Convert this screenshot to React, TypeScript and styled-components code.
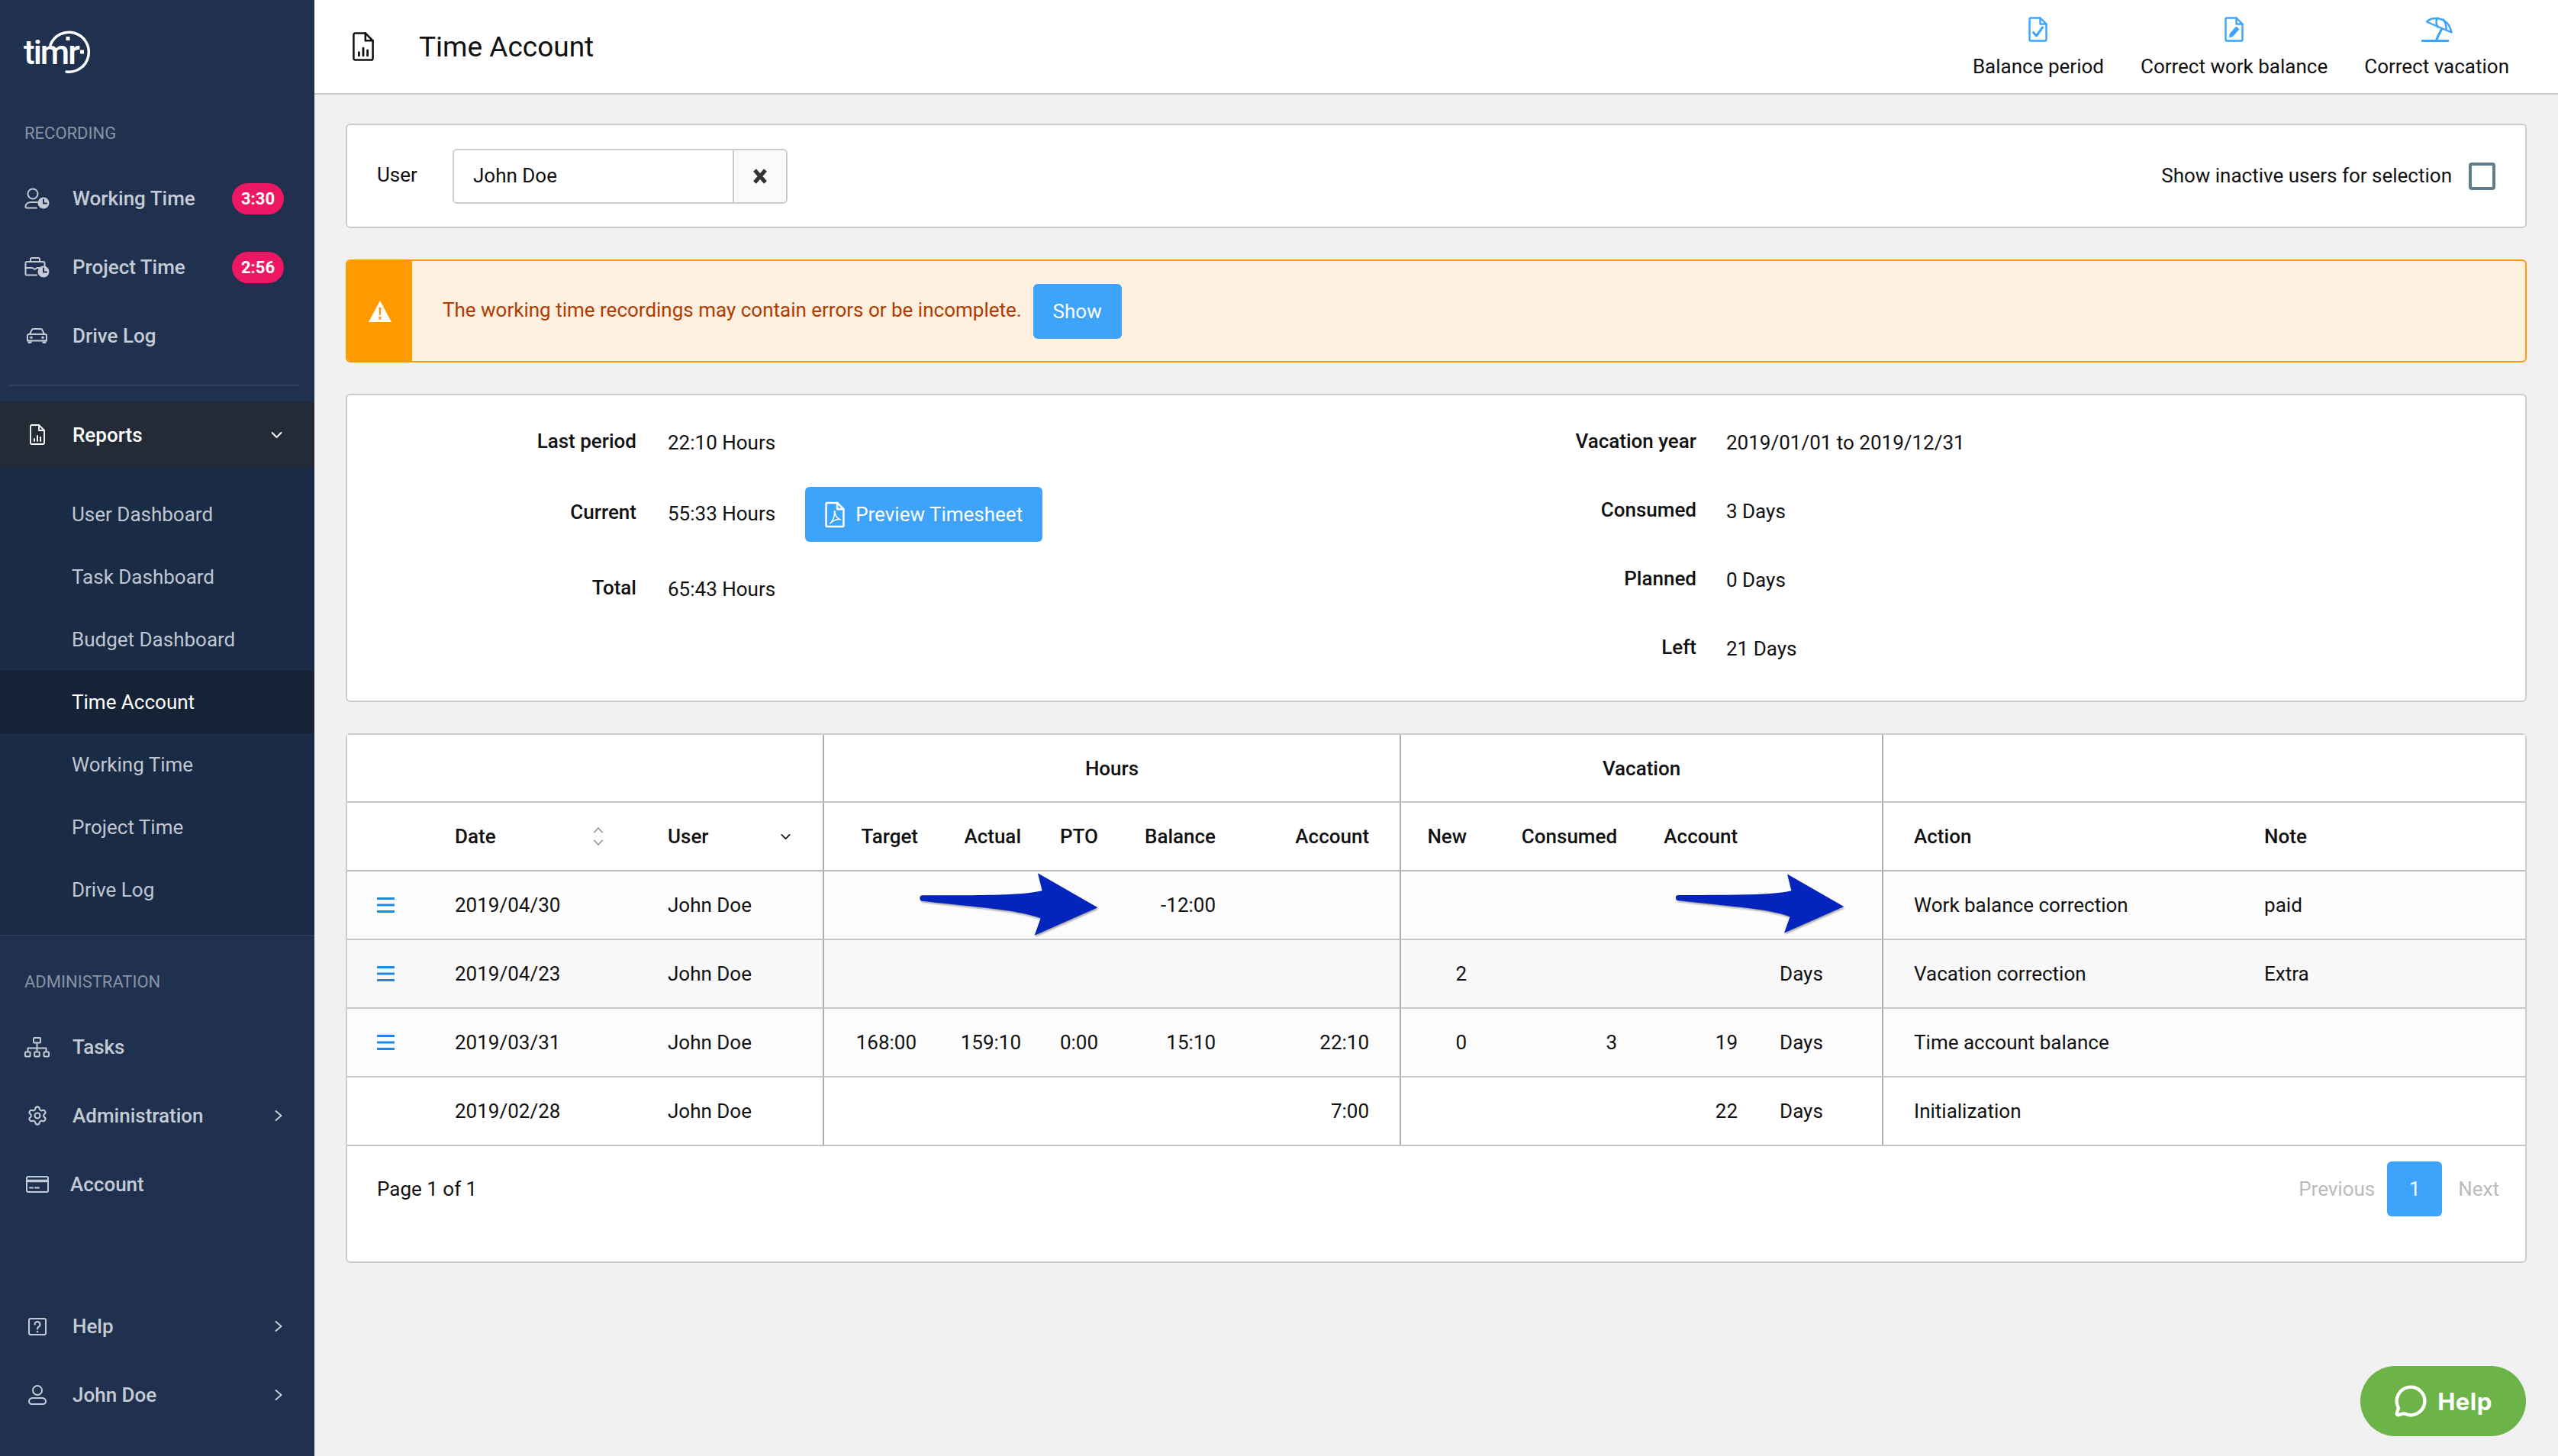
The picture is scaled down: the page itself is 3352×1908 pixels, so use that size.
import React from 'react'
import styled, { createGlobalStyle } from 'styled-components'
import { MessageCircle, Settings } from 'lucide-react'

const GlobalStyle = createGlobalStyle`
	html, body {
		margin: 0;
		padding: 0;
		height: 100%;
		background: #f1f1f1;
		font-family: Roboto, "Liberation Sans", sans-serif;
		font-size: 26px;
		color: #111;
		overflow: hidden;
	}
	* {
		box-sizing: border-box;
	}
`

const Page = styled.div`
	display: flex;
	width: 3352px;
	height: 1908px;
`

/* sidebar */

const Sidebar = styled.aside`
	display: flex;
	flex-direction: column;
	flex: 0 0 412px;
	background: #1f314f;
	color: #c5cbd5;
	padding-bottom: 35px;
`

const LogoBox = styled.div`
	position: relative;
	height: 122px;
	flex: none;
`

const LogoText = styled.span`
	position: absolute;
	left: 31px;
	top: 44px;
	font-size: 44px;
	line-height: 50px;
	font-weight: 500;
	letter-spacing: -2px;
	color: #fff;
`

const LogoClock = styled.svg`
	position: absolute;
	left: 58px;
	top: 38px;
`

const SectionTitle = styled.div<{ $top: number; $bottom: number }>`
	padding: ${(p) => p.$top}px 32px ${(p) => p.$bottom}px;
	font-size: 22px;
	line-height: 30px;
	color: #8793a5;
`

const NavItem = styled.div<{ $active?: boolean; $height?: number }>`
	display: flex;
	align-items: center;
	flex: none;
	height: ${(p) => p.$height || 90}px;
	padding: 0 40px 0 32px;
	font-weight: 500;
	color: ${(p) => (p.$active ? '#fff' : '#c5cbd5')};
	background: ${(p) => (p.$active ? '#232c36' : 'transparent')};
`

const NavIcon = styled.span<{ $gap?: number }>`
	display: flex;
	justify-content: center;
	align-items: center;
	width: 33px;
	margin-right: ${(p) => p.$gap ?? 30}px;
	color: inherit;
`

const NavLabel = styled.span`
	flex: 1;
`

const NavChevron = styled.span`
	display: flex;
	margin-right: 2px;
`

const Badge = styled.span`
	display: flex;
	align-items: center;
	justify-content: center;
	width: 68px;
	height: 41px;
	border-radius: 21px;
	background: #ee1763;
	color: #fff;
	font-size: 22px;
	font-weight: 700;
`

const SideDivider = styled.div`
	height: 2px;
	margin: 19px 20px 20px 12px;
	background: #32445f;
	flex: none;
`

const SubMenu = styled.div`
	flex: none;
	padding: 20px 0 18px;
	background: #1a2b45;
	border-bottom: 2px solid #2a3b58;
`

const SubItem = styled.div<{ $active?: boolean }>`
	display: flex;
	align-items: center;
	height: 82px;
	padding-left: 94px;
	color: ${(p) => (p.$active ? '#fff' : '#c0c6d1')};
	background: ${(p) => (p.$active ? '#162235' : 'transparent')};
`

const SideSpacer = styled.div`
	flex: 1;
`

/* header */

const Main = styled.main`
	display: flex;
	flex-direction: column;
	flex: 1;
	min-width: 0;
`

const Header = styled.header`
	display: flex;
	align-items: center;
	flex: none;
	height: 124px;
	padding: 0 64px 0 50px;
	background: #fff;
	border-bottom: 2px solid #ccc;
`

const PageTitle = styled.h1`
	flex: 1;
	margin: 0 0 0 59px;
	font-size: 37px;
	font-weight: 400;
	color: #111;
`

const HeaderActions = styled.div`
	display: flex;
	gap: 48px;
	align-self: flex-start;
	padding-top: 22px;
`

const HeaderAction = styled.div`
	display: flex;
	flex-direction: column;
	align-items: center;
	gap: 17px;
	line-height: 30px;
	color: #111;
`

const ActionIcon = styled.span`
	display: flex;
	height: 33px;
	color: #3ea3fb;
`

/* content */

const Content = styled.div`
	display: flex;
	flex-direction: column;
	gap: 41px;
	padding: 38px 41px 0;
`

const Card = styled.section`
	background: #fff;
	border: 2px solid #ccc;
	border-radius: 6px;
`

const UserCard = styled(Card)`
	display: flex;
	align-items: center;
	height: 137px;
	padding: 0 39px;
`

const UserLabel = styled.span`
	width: 99px;
	margin-bottom: 4px;
`

const InputGroup = styled.div`
	display: flex;
	width: 439px;
	height: 72px;
	border: 2px solid #ccc;
	border-radius: 6px;
	overflow: hidden;
`

const InputValue = styled.div`
	display: flex;
	align-items: center;
	flex: 1;
	padding: 0 0 2px 25px;
	background: #fff;
`

const ClearButton = styled.div`
	display: flex;
	align-items: center;
	justify-content: center;
	width: 70px;
	background: #fafafa;
	border-left: 2px solid #ccc;
	color: #333;
`

const InactiveToggle = styled.label`
	display: flex;
	align-items: center;
	gap: 22px;
	margin-left: auto;
`

const ToggleText = styled.span`
	margin-bottom: 2px;
`

const CheckBox = styled.span`
	width: 35px;
	height: 36px;
	border: 4px solid #607d8e;
	border-radius: 4px;
`

const Banner = styled.section`
	display: flex;
	height: 135px;
	background: #fdf0df;
	border: 2px solid #ff9a00;
	border-radius: 6px;
	overflow: hidden;
`

const BannerSign = styled.div`
	display: flex;
	align-items: center;
	justify-content: center;
	width: 85px;
	background: #ff9a00;
`

const BannerBody = styled.div`
	display: flex;
	align-items: center;
	gap: 15px;
	padding-left: 40px;
	color: #b23a00;
`

const BannerText = styled.span`
	margin-bottom: 3px;
`

const PrimaryButton = styled.button`
	display: flex;
	align-items: center;
	height: 72px;
	border: 0;
	border-radius: 6px;
	background: #3ea3fb;
	color: #fff;
	font: inherit;
`

const ShowButton = styled(PrimaryButton)`
	width: 116px;
	justify-content: center;
`

const InfoCard = styled(Card)`
	display: flex;
	height: 404px;
`

const InfoColumn = styled.div`
	display: flex;
	flex-direction: column;
	flex: 0 0 50%;
`

const InfoRow = styled.div<{ $top: number }>`
	display: flex;
	align-items: center;
	margin-top: ${(p) => p.$top}px;
`

const InfoLabel = styled.span<{ $width: number }>`
	width: ${(p) => p.$width}px;
	margin-bottom: 4px;
	line-height: 30px;
	font-weight: 500;
	text-align: right;
`

const InfoValue = styled.span<{ $gap: number }>`
	margin-left: ${(p) => p.$gap}px;
	line-height: 30px;
`

const PreviewButton = styled(PrimaryButton)`
	width: 311px;
	margin: 3px 0 0 39px;
	padding-left: 26px;
	gap: 14px;
`

/* table */

const TableCard = styled(Card)`
	position: relative;
	height: 694px;
`

const Table = styled.table`
	width: 2854px;
	table-layout: fixed;
	border-collapse: separate;
	border-spacing: 0;
`

const Col = styled.col<{ $width: number }>`
	width: ${(p) => p.$width}px;
`

const Row = styled.tr<{ $shade?: string }>`
	background: ${(p) => p.$shade || '#fff'};
`

const Cell = styled.td<{
	$right?: boolean
	$center?: boolean
	$start?: boolean
	$strong?: boolean
	$heavy?: boolean
	$pl?: number
	$pr?: number
	$height?: number
}>`
	height: ${(p) => p.$height || 90}px;
	padding: 0 ${(p) => p.$pr ?? 20}px 0 ${(p) => p.$pl ?? 20}px;
	text-align: ${(p) => (p.$right ? 'right' : p.$center ? 'center' : 'left')};
	font-weight: ${(p) => (p.$strong ? 500 : 400)};
	border-bottom: 2px solid ${(p) => (p.$heavy ? '#bbb' : '#c8c8c8')};
	border-left: ${(p) => (p.$start ? '2px solid #adadad' : '0')};
	white-space: nowrap;
`

const HeadSplit = styled.div<{ $end: number }>`
	display: flex;
	align-items: center;
	justify-content: space-between;
	padding-right: ${(p) => p.$end}px;
`

const MenuButton = styled.span`
	display: flex;
	color: #1e88e5;
`

const ArrowMark = styled.svg<{ $left: number; $top: number }>`
	position: absolute;
	left: ${(p) => p.$left}px;
	top: ${(p) => p.$top}px;
	color: #0324bd;
	filter: drop-shadow(1px 2px 1px rgba(0, 0, 0, 0.35));
`

const TableFooter = styled.div`
	display: flex;
	align-items: center;
	justify-content: space-between;
	padding: 20px 34px 0 39px;
`

const Pagination = styled.div`
	display: flex;
	align-items: center;
	color: #bbb;
`

const PageCurrent = styled.span`
	display: flex;
	align-items: center;
	justify-content: center;
	width: 72px;
	height: 72px;
	margin: 0 21px 0 16px;
	border-radius: 6px;
	background: #3ea3fb;
	color: #fff;
`

const HelpFab = styled.button`
	position: fixed;
	right: 42px;
	bottom: 26px;
	display: flex;
	align-items: center;
	justify-content: center;
	gap: 13px;
	width: 217px;
	height: 92px;
	border: 0;
	border-radius: 46px;
	background: #6cb447;
	color: #fff;
	font-family: Inter, Roboto, sans-serif;
	font-size: 31px;
	font-weight: 700;
	letter-spacing: 0.5px;
`

/* icons */

const strokeProps = {
	fill: 'none',
	stroke: 'currentColor',
	strokeLinecap: 'round' as const,
	strokeLinejoin: 'round' as const,
}

const WorkingTimeIcon = () => (
	<svg width="33" height="28" viewBox="0 0 33 28" {...strokeProps} strokeWidth="2">
		<circle cx="11" cy="8" r="6.5" />
		<path d="M16 26.5H3A1.5 1.5 0 0 1 1.5 25v-.5c0-3.2 3.2-5.5 6.5-5.5h9" />
		<circle cx="25" cy="20" r="7.5" fill="currentColor" stroke="none" />
		<path d="M25 15.5V20.5H29" stroke="#1f314f" />
	</svg>
)

const ProjectTimeIcon = () => (
	<svg width="33" height="27" viewBox="0 0 33 27" {...strokeProps} strokeWidth="2">
		<path d="M16 23.5H3A1.5 1.5 0 0 1 1.5 22V7.5A1.5 1.5 0 0 1 3 6h22a1.5 1.5 0 0 1 1.5 1.5V12" />
		<path d="M8 6V2.5A1.5 1.5 0 0 1 9.5 1h9A1.5 1.5 0 0 1 20 2.5V6" />
		<path d="M1.5 14h9l3 2 3-2h4" />
		<circle cx="25" cy="19" r="7.5" fill="currentColor" stroke="none" />
		<path d="M25 14.5V19.5H29" stroke="#1f314f" />
	</svg>
)

const CarIcon = () => (
	<svg width="27" height="20" viewBox="0 0 27 20" {...strokeProps} strokeWidth="2">
		<path d="M4 8 6.5 2.6A2.5 2.5 0 0 1 8.8 1h9.4a2.5 2.5 0 0 1 2.3 1.6L23 8" />
		<path d="M3 8h21a2 2 0 0 1 2 2v6.5H1V10a2 2 0 0 1 2-2z" />
		<path d="M2.5 16.5V19h3v-2.5M21.5 16.5V19h3v-2.5" />
		<circle cx="6" cy="12.3" r="0.8" />
		<circle cx="21" cy="12.3" r="0.8" />
	</svg>
)

const ReportFileIcon = ({ width = 20, height = 27 }: { width?: number; height?: number }) => (
	<svg width={width} height={height} viewBox="0 0 20 27" {...strokeProps} strokeWidth="1.8">
		<path d="M2.5 1H12l7 7v16.5a1.5 1.5 0 0 1-1.5 1.5h-15A1.5 1.5 0 0 1 1 24.5v-22A1.5 1.5 0 0 1 2.5 1z" />
		<path d="M12 1v7h7" />
		<path d="M6 22v-3M10 22v-7M14 22v-5" strokeWidth="2" />
	</svg>
)

const TasksIcon = () => (
	<svg width="33" height="27" viewBox="0 0 33 27" {...strokeProps} strokeWidth="2">
		<rect x="12" y="1" width="9" height="6.5" rx="1" />
		<path d="M16.5 7.5v10M4.5 18.5v-4h24v4" />
		<rect x="1" y="19.5" width="6.5" height="6" rx="1" />
		<rect x="13.2" y="19.5" width="6.5" height="6" rx="1" />
		<rect x="25.5" y="19.5" width="6.5" height="6" rx="1" />
	</svg>
)

const CardIcon = () => (
	<svg width="30" height="22" viewBox="0 0 30 22" {...strokeProps} strokeWidth="2">
		<rect x="1" y="1" width="28" height="20" rx="2" />
		<path d="M1 6.5h28" strokeWidth="3.5" strokeLinecap="butt" />
		<path d="M5 15.5h4M12 15.5h5" />
	</svg>
)

const HelpBoxIcon = () => (
	<svg width="24" height="23" viewBox="0 0 24 23" {...strokeProps} strokeWidth="2">
		<rect x="1" y="1" width="22" height="21" rx="2" />
		<path d="M8.5 8.5a3.5 3.5 0 1 1 5.5 2.9c-1.3.9-2 1.5-2 3" strokeWidth="2.2" />
		<path d="M12 18v.2" strokeWidth="2.4" />
	</svg>
)

const PersonIcon = () => (
	<svg width="24" height="26" viewBox="0 0 24 26" {...strokeProps} strokeWidth="2">
		<circle cx="12" cy="7" r="6" />
		<path d="M6 17h12a5 5 0 0 1 5 4v.5a3.5 3.5 0 0 1-3.5 3.5h-15A3.5 3.5 0 0 1 1 21.5V21a5 5 0 0 1 5-4z" />
	</svg>
)

const ChevronRight = () => (
	<svg width="10" height="16" viewBox="0 0 10 16" {...strokeProps} strokeWidth="2">
		<path d="M1.5 2 8.5 8l-7 6" />
	</svg>
)

const ChevronDown = ({ width = 15, height = 10 }: { width?: number; height?: number }) => (
	<svg width={width} height={height} viewBox="0 0 15 10" {...strokeProps} strokeWidth="2">
		<path d="M1.5 2 7.5 8l6-6" />
	</svg>
)

const SortIcon = () => (
	<svg width="14" height="26" viewBox="0 0 14 26" {...strokeProps} stroke="#999" strokeWidth="1.8">
		<path d="M2 7.5 7 2l5 5.5M2 18.5 7 24l5-5.5" />
	</svg>
)

const FileOutline = () => (
	<>
		<path d="M3 1.5h12.5l8 8V30a1.5 1.5 0 0 1-1.5 1.5H3A1.5 1.5 0 0 1 1.5 30V3A1.5 1.5 0 0 1 3 1.5z" />
		<path d="M15.5 1.5v8h8" />
	</>
)

const CheckFileIcon = () => (
	<svg width="25" height="33" viewBox="0 0 25 33" {...strokeProps} strokeWidth="2.4">
		<FileOutline />
		<path d="M6.5 20.5l4 4.5 8-11" strokeWidth="3" />
	</svg>
)

const PencilFileIcon = () => (
	<svg width="25" height="33" viewBox="0 0 25 33" {...strokeProps} strokeWidth="2.4">
		<FileOutline />
		<path d="M6.5 26.5l.8-4.5 8-9 3.6 3.3-8 9z" fill="currentColor" strokeWidth="1" />
	</svg>
)

const UmbrellaIcon = () => (
	<svg width="42" height="33" viewBox="0 0 42 33" {...strokeProps} strokeWidth="2.4">
		<path d="M8 6.5C14 -1 36 -1 40.5 20.5z" />
		<path d="M22 1.5c-2 3-2 7 0 12M30 3.5c3 5 4 9 3.5 14" />
		<path d="M28 15 20 31.5M1 31.5h36" strokeLinecap="butt" strokeWidth="3" />
	</svg>
)

const PdfFileIcon = () => (
	<svg width="26" height="35" viewBox="0 0 25 33" {...strokeProps} strokeWidth="2.4">
		<FileOutline />
		<path d="M6.5 27.5c3-2 6-9 5.5-14-1-2 1-2 .8 0 0 4 2.5 8 6.7 9-3.5-1-9 1-13 5z" strokeWidth="1.4" />
	</svg>
)

const WarningIcon = () => (
	<svg width="30" height="28" viewBox="0 0 30 28">
		<path d="M15 0 30 28H0z" fill="#fff" />
		<path d="M13.5 9h3l-.6 10h-1.8zM13.5 21h3v3.5h-3z" fill="#ff9a00" />
	</svg>
)

const ClearIcon = () => (
	<svg width="20" height="20" viewBox="0 0 20 20" fill="none" stroke="currentColor" strokeWidth="5">
		<path d="M3 2l14 16M17 2 3 18" />
	</svg>
)

const MenuIcon = () => (
	<svg width="23" height="20" viewBox="0 0 23 20" fill="currentColor">
		<rect y="0" width="23" height="3" />
		<rect y="8.5" width="23" height="3" />
		<rect y="17" width="23" height="3" />
	</svg>
)

const BlueArrow = ({ left, top, width, height }: { left: number; top: number; width: number; height: number }) => (
	<ArrowMark $left={left} $top={top} width={width} height={height} viewBox="0 0 810 330">
		<path
			fill="currentColor"
			d="M57 130C250 130 440 132 527 112L510 43L745 178L497 287L521 220C430 185 250 175 57 152A11 11 0 0 1 57 130Z"
		/>
	</ArrowMark>
)

/* data */

type TableRow = {
	menu: boolean
	date: string
	target?: string
	actual?: string
	pto?: string
	balance?: string
	account?: string
	added?: string
	consumed?: string
	left?: string
	unit?: string
	action: string
	note?: string
	shade: string
}

const rows: TableRow[] = [
	{ menu: true, date: '2019/04/30', balance: '-12:00', action: 'Work balance correction', note: 'paid', shade: '#fcfcfc' },
	{ menu: true, date: '2019/04/23', added: '2', unit: 'Days', action: 'Vacation correction', note: 'Extra', shade: '#f8f8f8' },
	{
		menu: true,
		date: '2019/03/31',
		target: '168:00',
		actual: '159:10',
		pto: '0:00',
		balance: '15:10',
		account: '22:10',
		added: '0',
		consumed: '3',
		left: '19',
		unit: 'Days',
		action: 'Time account balance',
		shade: '#fcfcfc',
	},
	{ menu: false, date: '2019/02/28', account: '7:00', left: '22', unit: 'Days', action: 'Initialization', shade: '#fff' },
]

const colWidths = [121, 279, 223, 143, 137, 99, 156, 221, 108, 195, 175, 154, 481, 362]

const reportLinks = ['User Dashboard', 'Task Dashboard', 'Budget Dashboard', 'Time Account', 'Working Time', 'Project Time', 'Drive Log']

const App = () => (
	<Page>
		<GlobalStyle />
		<Sidebar>
			<LogoBox>
				<LogoText>timr</LogoText>
				<LogoClock width="62" height="62" viewBox="0 0 62 62" fill="none" stroke="#fff" strokeWidth="3.5" strokeLinecap="round">
					<path d="M8 21A26 26 0 1 1 29 56" />
					<path d="M31 10v5M47 30h5" strokeWidth="5" strokeLinecap="butt" />
				</LogoClock>
			</LogoBox>

			<SectionTitle $top={38} $bottom={25}>RECORDING</SectionTitle>
			<NavItem>
				<NavIcon><WorkingTimeIcon /></NavIcon>
				<NavLabel>Working Time</NavLabel>
				<Badge>3:30</Badge>
			</NavItem>
			<NavItem>
				<NavIcon><ProjectTimeIcon /></NavIcon>
				<NavLabel>Project Time</NavLabel>
				<Badge>2:56</Badge>
			</NavItem>
			<NavItem>
				<NavIcon><CarIcon /></NavIcon>
				<NavLabel>Drive Log</NavLabel>
			</NavItem>
			<SideDivider />

			<NavItem $active $height={87}>
				<NavIcon><ReportFileIcon /></NavIcon>
				<NavLabel>Reports</NavLabel>
				<NavChevron><ChevronDown /></NavChevron>
			</NavItem>
			<SubMenu>
				{reportLinks.map((link) => (
					<SubItem key={link} $active={link === 'Time Account'}>{link}</SubItem>
				))}
			</SubMenu>

			<SectionTitle $top={45} $bottom={25}>ADMINISTRATION</SectionTitle>
			<NavItem>
				<NavIcon><TasksIcon /></NavIcon>
				<NavLabel>Tasks</NavLabel>
			</NavItem>
			<NavItem>
				<NavIcon><Settings size={28} strokeWidth={1.8} /></NavIcon>
				<NavLabel>Administration</NavLabel>
				<NavChevron><ChevronRight /></NavChevron>
			</NavItem>
			<NavItem>
				<NavIcon $gap={27}><CardIcon /></NavIcon>
				<NavLabel>Account</NavLabel>
			</NavItem>
			<SideSpacer />
			<NavItem>
				<NavIcon><HelpBoxIcon /></NavIcon>
				<NavLabel>Help</NavLabel>
				<NavChevron><ChevronRight /></NavChevron>
			</NavItem>
			<NavItem>
				<NavIcon><PersonIcon /></NavIcon>
				<NavLabel>John Doe</NavLabel>
				<NavChevron><ChevronRight /></NavChevron>
			</NavItem>
		</Sidebar>

		<Main>
			<Header>
				<ReportFileIcon width={28} height={38} />
				<PageTitle>Time Account</PageTitle>
				<HeaderActions>
					<HeaderAction>
						<ActionIcon><CheckFileIcon /></ActionIcon>
						Balance period
					</HeaderAction>
					<HeaderAction>
						<ActionIcon><PencilFileIcon /></ActionIcon>
						Correct work balance
					</HeaderAction>
					<HeaderAction>
						<ActionIcon><UmbrellaIcon /></ActionIcon>
						Correct vacation
					</HeaderAction>
				</HeaderActions>
			</Header>

			<Content>
				<UserCard>
					<UserLabel>User</UserLabel>
					<InputGroup>
						<InputValue>John Doe</InputValue>
						<ClearButton><ClearIcon /></ClearButton>
					</InputGroup>
					<InactiveToggle>
						<ToggleText>Show inactive users for selection</ToggleText>
						<CheckBox />
					</InactiveToggle>
				</UserCard>

				<Banner>
					<BannerSign><WarningIcon /></BannerSign>
					<BannerBody>
						<BannerText>The working time recordings may contain errors or be incomplete.</BannerText>
						<ShowButton>Show</ShowButton>
					</BannerBody>
				</Banner>

				<InfoCard>
					<InfoColumn>
						<InfoRow $top={45}>
							<InfoLabel $width={379}>Last period</InfoLabel>
							<InfoValue $gap={41}>22:10 Hours</InfoValue>
						</InfoRow>
						<InfoRow $top={38}>
							<InfoLabel $width={379}>Current</InfoLabel>
							<InfoValue $gap={41}>55:33 Hours</InfoValue>
							<PreviewButton><PdfFileIcon />Preview Timesheet</PreviewButton>
						</InfoRow>
						<InfoRow $top={45}>
							<InfoLabel $width={379}>Total</InfoLabel>
							<InfoValue $gap={41}>65:43 Hours</InfoValue>
						</InfoRow>
					</InfoColumn>
					<InfoColumn>
						<InfoRow $top={45}>
							<InfoLabel $width={341}>Vacation year</InfoLabel>
							<InfoValue $gap={39}>2019/01/01 to 2019/12/31</InfoValue>
						</InfoRow>
						<InfoRow $top={56}>
							<InfoLabel $width={341}>Consumed</InfoLabel>
							<InfoValue $gap={39}>3 Days</InfoValue>
						</InfoRow>
						<InfoRow $top={56}>
							<InfoLabel $width={341}>Planned</InfoLabel>
							<InfoValue $gap={39}>0 Days</InfoValue>
						</InfoRow>
						<InfoRow $top={56}>
							<InfoLabel $width={341}>Left</InfoLabel>
							<InfoValue $gap={39}>21 Days</InfoValue>
						</InfoRow>
					</InfoColumn>
				</InfoCard>

				<TableCard>
					<Table>
						<colgroup>
							{colWidths.map((width, index) => (
								<Col key={index} $width={width} />
							))}
						</colgroup>
						<thead>
							<Row>
								<Cell as="th" colSpan={3} $height={89} />
								<Cell as="th" colSpan={5} $start $center $strong $height={89}>Hours</Cell>
								<Cell as="th" colSpan={4} $start $center $strong $height={89}>Vacation</Cell>
								<Cell as="th" colSpan={2} $start $height={89} />
							</Row>
							<Row>
								<Cell as="th" $heavy />
								<Cell as="th" $strong $heavy>
									<HeadSplit $end={44}>Date<SortIcon /></HeadSplit>
								</Cell>
								<Cell as="th" $strong $heavy>
									<HeadSplit $end={22}>User<ChevronDown width={13} height={9} /></HeadSplit>
								</Cell>
								<Cell as="th" $start $right $strong $heavy $pr={18}>Target</Cell>
								<Cell as="th" $right $strong $heavy>Actual</Cell>
								<Cell as="th" $right $strong $heavy $pr={18}>PTO</Cell>
								<Cell as="th" $right $strong $heavy>Balance</Cell>
								<Cell as="th" $right $strong $heavy $pr={40}>Account</Cell>
								<Cell as="th" $start $right $strong $heavy>New</Cell>
								<Cell as="th" $right $strong $heavy $pr={18}>Consumed</Cell>
								<Cell as="th" $right $strong $heavy $pr={35}>Account</Cell>
								<Cell as="th" $heavy />
								<Cell as="th" $start $strong $heavy $pl={40}>Action</Cell>
								<Cell as="th" $strong $heavy>Note</Cell>
							</Row>
						</thead>
						<tbody>
							{rows.map((row) => (
								<Row key={row.date} $shade={row.shade}>
									<Cell $pl={39}>
										{row.menu && <MenuButton><MenuIcon /></MenuButton>}
									</Cell>
									<Cell>{row.date}</Cell>
									<Cell>John Doe</Cell>
									<Cell $start $right>{row.target}</Cell>
									<Cell $right>{row.actual}</Cell>
									<Cell $right $pr={18}>{row.pto}</Cell>
									<Cell $right>{row.balance}</Cell>
									<Cell $right $pr={40}>{row.account}</Cell>
									<Cell $start $right>{row.added}</Cell>
									<Cell $right $pr={18}>{row.consumed}</Cell>
									<Cell $right $pr={35}>{row.left}</Cell>
									<Cell>{row.unit}</Cell>
									<Cell $start $pl={40}>{row.action}</Cell>
									<Cell>{row.note}</Cell>
								</Row>
							))}
						</tbody>
					</Table>
					<TableFooter>
						<span>Page 1 of 1</span>
						<Pagination>
							Previous
							<PageCurrent>1</PageCurrent>
							Next
						</Pagination>
					</TableFooter>
					<BlueArrow left={735} top={167} width={270} height={110} />
					<BlueArrow left={1726} top={169} width={256} height={104} />
				</TableCard>
			</Content>
		</Main>

		<HelpFab>
			<MessageCircle size={44} strokeWidth={2.4} />
			Help
		</HelpFab>
	</Page>
)

export default App
